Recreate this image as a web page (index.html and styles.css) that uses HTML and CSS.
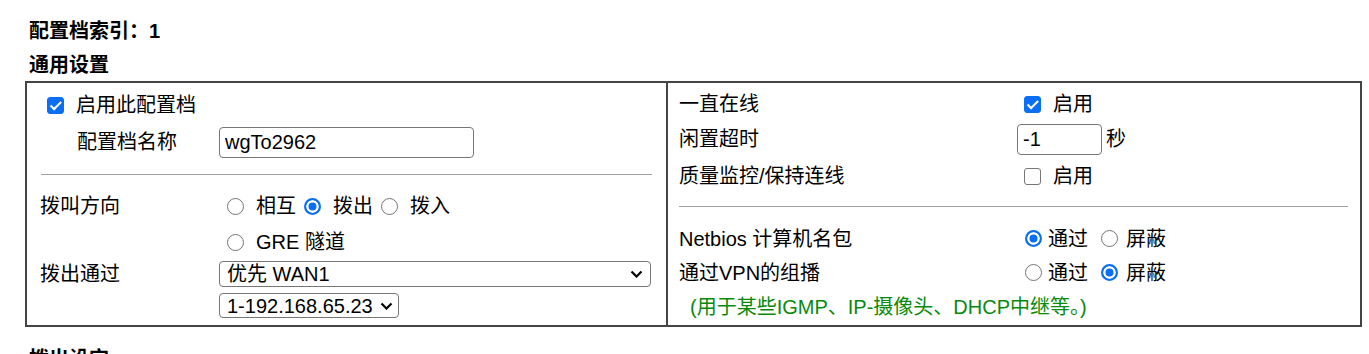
FILE: index.html
```html
<!DOCTYPE html>
<html lang="zh-CN">
<head>
  <meta charset="UTF-8" />
  <title>配置档</title>
  <link rel="stylesheet" href="styles.css">
</head>
<body>
  <div class="title">配置档索引<span class="colon">：</span>1</div>
  <div class="section">通用设置</div>

  <div class="panel">
    <div class="col col-left">
      <div class="line enable-row">
        <input type="checkbox" class="cb" checked>
        <span class="cb-text">启用此配置档</span>
      </div>
      <div class="row name-row">
        <span class="label indent">配置档名称</span>
        <span><input type="text" class="text name-input" value="wgTo2962"></span>
      </div>
      <div class="rule"></div>
      <div class="row dir-row">
        <span class="label">拨叫方向</span>
        <span class="opts">
          <input type="radio" name="dir" class="rd"><span class="rd-text">相互</span>
          <input type="radio" name="dir" class="rd" checked><span class="rd-text">拨出</span>
          <input type="radio" name="dir" class="rd"><span class="rd-text">拨入</span>
        </span>
      </div>
      <div class="row gre-row">
        <span class="label"></span>
        <span class="opts">
          <input type="radio" name="dir" class="rd"><span class="rd-text">GRE 隧道</span>
        </span>
      </div>
      <div class="row wan-row">
        <span class="label">拨出通过</span>
        <span class="sel-wrap wan">
          <select class="sel"><option>优先 WAN1</option></select>
          <svg class="chev" width="13" height="8" viewBox="0 0 13 8"><path d="M1.5 1.5 L6.5 6.5 L11.5 1.5" fill="none" stroke="#000" stroke-width="2.2"/></svg>
        </span>
      </div>
      <div class="row ip-row">
        <span class="label"></span>
        <span class="sel-wrap ip">
          <select class="sel"><option>1-192.168.65.23</option></select>
          <svg class="chev" width="13" height="8" viewBox="0 0 13 8"><path d="M1.5 1.5 L6.5 6.5 L11.5 1.5" fill="none" stroke="#000" stroke-width="2.2"/></svg>
        </span>
      </div>
    </div>

    <div class="col col-right">
      <div class="row r-online">
        <span class="label">一直在线</span>
        <span class="opts"><input type="checkbox" class="cb cb-r" checked><span class="cb-text">启用</span></span>
      </div>
      <div class="row r-idle">
        <span class="label">闲置超时</span>
        <span class="opts"><input type="text" class="text idle-input" value="-1"><span class="unit">秒</span></span>
      </div>
      <div class="row r-keep">
        <span class="label">质量监控/保持连线</span>
        <span class="opts"><input type="checkbox" class="cb cb-r"><span class="cb-text">启用</span></span>
      </div>
      <div class="rule rule-r"></div>
      <div class="row r-netbios">
        <span class="label">Netbios 计算机名包</span>
        <span class="opts">
          <input type="radio" name="nb" class="rd rd-r" checked><span class="rd-text-r">通过</span>
          <input type="radio" name="nb" class="rd rd-r rd-r2"><span class="rd-text-r2">屏蔽</span>
        </span>
      </div>
      <div class="row r-vpn">
        <span class="label">通过VPN的组播</span>
        <span class="opts">
          <input type="radio" name="mc" class="rd rd-r"><span class="rd-text-r">通过</span>
          <input type="radio" name="mc" class="rd rd-r rd-r2" checked><span class="rd-text-r2">屏蔽</span>
        </span>
      </div>
      <div class="note">(用于某些IGMP、IP-摄像头、DHCP中继等。)</div>
    </div>
  </div>

  <div class="section next">拨出设定</div>
</body>
</html>
```

FILE: styles.css
```css
body {
  margin: 0;
  font-family: "Liberation Sans", Arial, "Noto Sans CJK SC", sans-serif;
  font-size: 20px;
  line-height: 24px;
  color: #000;
  background: #fff;
}
.title {
  margin: 18px 0 0 29px;
  font-weight: bold;
}
.colon {
  font-family: "Noto Sans CJK TC", sans-serif;
}
.section {
  margin: 10px 0 0 29px;
  font-weight: bold;
}
.section.next {
  margin-top: 20px;
}
.panel {
  display: flex;
  box-sizing: border-box;
  width: 1337px;
  margin: 4px 0 0 25px;
  border: 2px solid #444;
}
.col-left {
  width: 639px;
  padding: 4px 0 7px;
}
.col-right {
  flex: 1;
  border-left: 2px solid #444;
  padding-top: 4px;
}
.row {
  display: grid;
  align-items: center;
}
.col-left .row {
  grid-template-columns: 192px 1fr;
}
.col-right .row {
  grid-template-columns: 349px 1fr;
}
.label {
  padding-left: 13px;
  white-space: nowrap;
}
.col-right .label {
  padding-left: 11px;
}
.label.indent {
  padding-left: 50px;
}
.opts {
  display: flex;
  align-items: center;
}
.line {
  display: flex;
  align-items: center;
}

/* left column rows */
.enable-row { height: 36px; }
.name-row { height: 38px; }
.dir-row { height: 34px; margin-top: 14px; }
.gre-row { height: 38px; }
.wan-row { height: 26px; }
.ip-row { height: 25px; margin-top: 6px; }

/* right column rows */
.r-online { height: 34px; }
.r-idle { height: 36px; }
.r-keep { height: 38px; }
.r-netbios { height: 35px; margin-top: 14px; }
.r-vpn { height: 33px; }

.rule {
  margin: 13px 14px 0;
  border-top: 1px solid #a0a0a0;
}
.rule-r {
  margin: 11px 12px 0 11px;
}

/* checkbox + radio drawn by hand, sized like the zoomed page */
.cb, .rd {
  -webkit-appearance: none;
  appearance: none;
  position: relative;
  box-sizing: border-box;
  width: 17px;
  height: 17px;
  margin: 0;
  border: 1.5px solid #767676;
  background: #fff;
}
.cb {
  border-radius: 3px;
}
.cb:checked {
  border-color: #0b6ff5;
  background: #0b6ff5;
}
.cb:checked::after {
  content: "";
  position: absolute;
  left: 4.5px;
  top: 1px;
  width: 4px;
  height: 8.5px;
  border: solid #fff;
  border-width: 0 2.5px 2.5px 0;
  transform: rotate(45deg);
}
.rd {
  border-radius: 50%;
}
.rd:checked {
  border: 2px solid #0b6ff5;
  background: #0b6ff5;
  box-shadow: inset 0 0 0 2.5px #fff;
}
.enable-row .cb {
  margin-left: 20px;
}
.cb-text {
  margin-left: 12px;
}
.cb-r {
  margin-left: 7px;
}
.rd {
  margin-left: 8px;
}
.rd-text {
  margin-left: 12px;
}
.rd-text-r {
  margin-left: 6px;
}
.rd-r2 {
  margin-left: 13px;
}
.rd-text-r2 {
  margin-left: 8px;
}

.text {
  box-sizing: border-box;
  height: 31px;
  padding: 0 5px;
  border: 1px solid #767676;
  border-radius: 4px;
  font: 20px "Liberation Sans", Arial, sans-serif;
  color: #000;
  background: #fff;
}
.name-input {
  display: block;
  width: 255px;
}
.idle-input {
  width: 85px;
}
.unit {
  margin-left: 4px;
}

.sel-wrap {
  position: relative;
  display: block;
}
.sel-wrap.wan { width: 432px; height: 26px; }
.sel-wrap.ip { width: 180px; height: 25px; }
.sel {
  -webkit-appearance: none;
  appearance: none;
  box-sizing: border-box;
  width: 100%;
  height: 100%;
  padding: 0 7px;
  border: 1px solid #767676;
  border-radius: 4px;
  background: #fff;
  font: 20px "Liberation Sans", Arial, "Noto Sans CJK SC", sans-serif;
  color: #000;
}
.chev {
  position: absolute;
  top: 50%;
  right: 8px;
  margin-top: -4px;
  pointer-events: none;
}
.ip .chev {
  right: 6px;
}

.note {
  height: 36px;
  line-height: 36px;
  padding-left: 22px;
  color: #0a8a0a;
}
```
